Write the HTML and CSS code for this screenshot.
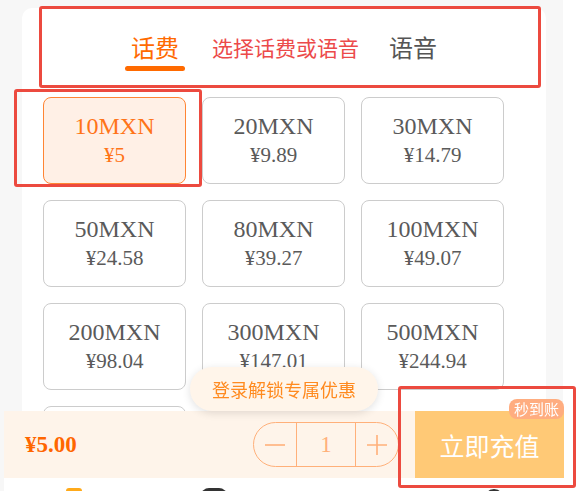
FILE: index.html
```html
<!DOCTYPE html>
<html lang="zh-CN">
<head>
  <meta charset="UTF-8" />
  <meta name="viewport" content="width=device-width, initial-scale=1.0" />
  <title>话费充值</title>
  <link rel="stylesheet" href="styles.css">
</head>
<body>
  <div class="page">
    <div class="panel">
      <div class="tabs">
        <div class="tab active">话费</div>
        <div class="tab-hint">选择话费或语音</div>
        <div class="tab">语音</div>
      </div>

      <div class="grid">
        <div class="item selected"><div class="amount">10MXN</div><div class="price">¥5</div></div>
        <div class="item"><div class="amount">20MXN</div><div class="price">¥9.89</div></div>
        <div class="item"><div class="amount">30MXN</div><div class="price">¥14.79</div></div>
        <div class="item"><div class="amount">50MXN</div><div class="price">¥24.58</div></div>
        <div class="item"><div class="amount">80MXN</div><div class="price">¥39.27</div></div>
        <div class="item"><div class="amount">100MXN</div><div class="price">¥49.07</div></div>
        <div class="item"><div class="amount">200MXN</div><div class="price">¥98.04</div></div>
        <div class="item"><div class="amount">300MXN</div><div class="price">¥147.01</div></div>
        <div class="item"><div class="amount">500MXN</div><div class="price">¥244.94</div></div>
        <div class="item"></div>
      </div>
    </div>
  </div>

  <div class="login-tip">登录解锁专属优惠</div>

  <div class="footer">
    <div class="bar">
      <div class="total">¥5.00</div>
      <div class="stepper">
        <div class="step">
          <svg width="22" height="22" viewBox="0 0 22 22"><path d="M1 11h20" stroke="#ffb07a" stroke-width="1.6"/></svg>
        </div>
        <div class="count">1</div>
        <div class="step">
          <svg width="22" height="22" viewBox="0 0 22 22"><path d="M1 11h20M11 1v20" stroke="#ffb07a" stroke-width="1.6"/></svg>
        </div>
      </div>
      <button class="pay-btn">立即充值<span class="badge">秒到账</span></button>
    </div>
    <div class="tabbar">
      <div class="tabbar-item"><span class="icon icon-home"></span></div>
      <div class="tabbar-item"><span class="icon icon-card"></span></div>
      <div class="tabbar-item"></div>
      <div class="tabbar-item"><span class="icon icon-user"></span></div>
    </div>
  </div>

  <!-- annotation boxes -->
  <div class="mark mark-tabs"></div>
  <div class="mark mark-item"></div>
  <div class="mark mark-btn"></div>
</body>
</html>
```

FILE: styles.css
```css
html, body {
  margin: 0;
  height: 100%;
  overflow: hidden;
}

body {
  background-color: #fff;
  font-family: "Noto Sans CJK SC", sans-serif;
  color: #555;
}

.page {
  width: 563px;
  height: 491px;
  background-color: #f7f7f7;
  padding-top: 8px;
  box-sizing: border-box;
  overflow: hidden;
}

.panel {
  margin-left: 22px;
  width: 524px;
  height: 600px;
  background-color: #fff;
  border-radius: 10px;
  padding-top: 27px;
  box-sizing: border-box;
}

.tabs {
  display: flex;
  justify-content: center;
  align-items: center;
  height: 24px;
}

.tab {
  position: relative;
  font-size: 24px;
  line-height: 24px;
  color: #555;
}

.tab.active {
  color: #ff6a00;
  margin-right: 33px;
}

.tab.active::after {
  content: "";
  position: absolute;
  left: -6px;
  right: -6px;
  top: calc(100% + 7px);
  height: 5px;
  border-radius: 3px;
  background-color: #ff6a00;
}

.tab-hint {
  font-size: 21px;
  line-height: 24px;
  color: #ec4a4a;
  margin-right: 30px;
}

.grid {
  display: grid;
  grid-template-columns: repeat(3, 143px);
  grid-auto-rows: 87px;
  column-gap: 16px;
  row-gap: 16px;
  padding-left: 21px;
  margin-top: 38px;
}

.item {
  display: flex;
  flex-direction: column;
  justify-content: center;
  align-items: center;
  border: 1px solid #ccc;
  border-radius: 8px;
  box-sizing: border-box;
  font-family: "Liberation Serif", serif;
  color: #5a5a5a;
}

.item.selected {
  background-color: #fff0e6;
  border-color: #ff8534;
  color: #ff7418;
}

.amount {
  font-size: 24px;
  line-height: 28px;
  margin-top: -2px;
}

.price {
  font-size: 21px;
  line-height: 26px;
  margin-top: 2px;
}

.login-tip {
  position: fixed;
  left: 190px;
  top: 367px;
  width: 188px;
  height: 44px;
  line-height: 44px;
  text-align: center;
  border-radius: 22px;
  background-color: #fff5ea;
  color: #ff8a1f;
  font-size: 18px;
  box-shadow: 0 2px 8px rgba(0, 0, 0, 0.12);
  z-index: 2;
}

.footer {
  position: fixed;
  left: 4px;
  top: 411px;
  width: 560px;
}

.bar {
  display: flex;
  align-items: center;
  height: 67px;
  background-color: #fef4ea;
  padding-left: 21px;
}

.total {
  font-family: "Liberation Serif", serif;
  font-weight: bold;
  font-size: 23px;
  color: #ff6600;
}

.stepper {
  display: flex;
  margin-left: auto;
  margin-right: 16px;
  height: 45px;
  border: 1px solid #ffb07a;
  border-radius: 23px;
  box-sizing: border-box;
}

.step {
  width: 42px;
  display: flex;
  justify-content: center;
  align-items: center;
}

.count {
  width: 58px;
  border-left: 1px solid #ffb07a;
  border-right: 1px solid #ffb07a;
  text-align: center;
  line-height: 43px;
  font-family: "Liberation Serif", serif;
  font-size: 23px;
  color: #ffb07a;
}

.pay-btn {
  position: relative;
  width: 149px;
  height: 67px;
  border: none;
  background-color: #ffc976;
  color: #fff;
  font-family: "Noto Sans CJK SC", sans-serif;
  font-size: 25px;
  padding: 0;
}

.badge {
  position: absolute;
  right: 0;
  top: -12px;
  height: 20px;
  line-height: 20px;
  padding: 0 5px;
  border-radius: 8px;
  background-color: #ffad80;
  font-size: 15px;
  color: #fff;
}

.tabbar {
  display: flex;
  height: 60px;
  background-color: #fff;
}

.tabbar-item {
  flex: 1;
  display: flex;
  justify-content: center;
  padding-top: 10px;
}

.icon {
  display: block;
}

.icon-home {
  width: 16px;
  height: 20px;
  border-radius: 3px;
  background-color: #ffaa1a;
}

.icon-card {
  width: 26px;
  height: 20px;
  border-radius: 8px 8px 3px 3px;
  background-color: #333;
}

.icon-user {
  width: 16px;
  height: 16px;
  margin-top: 1px;
  border: 2px solid #333;
  border-radius: 50%;
}

.mark {
  position: fixed;
  border: 3px solid #ec4a3f;
  border-radius: 3px;
  box-sizing: border-box;
  z-index: 5;
}

.mark-tabs {
  left: 39px;
  top: 6px;
  width: 502px;
  height: 82px;
}

.mark-item {
  left: 14px;
  top: 89px;
  width: 188px;
  height: 98px;
}

.mark-btn {
  left: 398px;
  top: 386px;
  width: 178px;
  height: 102px;
}
```
